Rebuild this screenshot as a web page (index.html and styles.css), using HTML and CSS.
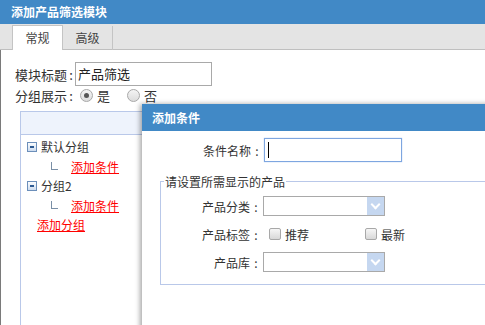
FILE: index.html
```html
<!DOCTYPE html>
<html lang="zh-CN">
<head>
  <meta charset="UTF-8" />
  <title>添加产品筛选模块</title>
  <link rel="stylesheet" href="styles.css">
</head>
<body>
  <div class="window">
    <div class="titlebar">添加产品筛选模块</div>

    <div class="tabs">
      <span class="tab active">常规</span>
      <span class="tab">高级</span>
    </div>

    <div class="content">
      <div class="row">
        <span class="label">模块标题<span class="colon">:</span></span>
        <span class="text-input">产品筛选</span>
      </div>
      <div class="row radios">
        <span class="label">分组展示<span class="colon">:</span></span>
        <span class="radio checked"></span><span class="opt">是</span>
        <span class="radio"></span><span class="opt">否</span>
      </div>

      <div class="tree-panel">
        <div class="tree-head"></div>
        <div class="tree">
          <div class="node"><span class="minus"></span>默认分组</div>
          <div class="leaf"><span class="elbow"></span><a href="#">添加条件</a></div>
          <div class="node"><span class="minus"></span>分组2</div>
          <div class="leaf"><span class="elbow"></span><a href="#">添加条件</a></div>
          <div class="add-group"><a href="#">添加分组</a></div>
        </div>
      </div>
    </div>

    <!-- popup over the module form -->
    <div class="dialog">
      <div class="dialog-title">添加条件</div>
      <div class="dialog-body">
        <div class="field name-field">
          <span class="dlabel">条件名称<span class="colon">:</span></span>
          <span class="text-input focus"><span class="caret"></span></span>
        </div>

        <fieldset class="products">
          <legend>请设置所需显示的产品</legend>
          <div class="field">
            <span class="dlabel">产品分类<span class="colon">:</span></span>
            <span class="select"><span class="arrow"></span></span>
          </div>
          <div class="field">
            <span class="dlabel">产品标签<span class="colon">:</span></span>
            <span class="check"></span><span class="check-text">推荐</span>
            <span class="check"></span><span class="check-text">最新</span>
          </div>
          <div class="field">
            <span class="dlabel">产品库<span class="colon">:</span></span>
            <span class="select"><span class="arrow"></span></span>
          </div>
        </fieldset>
      </div>
    </div>
  </div>
</body>
</html>
```

FILE: styles.css
```css
html, body {
  margin: 0;
  padding: 0;
  background: #fff;
  font-family: "Noto Sans CJK SC", "Liberation Sans", sans-serif;
  color: #333;
}

.window {
  position: relative;
  width: 485px;
  height: 325px;
  overflow: hidden;
}

.titlebar {
  height: 24px;
  line-height: 23px;
  padding-left: 11px;
  background: #4189c6;
  color: #fff;
  font-size: 12px;
  font-weight: bold;
}

.tabs {
  display: flex;
  height: 26px;
  padding-left: 12px;
  background: #e4e4e4;
  border-bottom: 1px solid #bfbfbf;
  box-sizing: border-box;
  align-items: flex-end;
}

.tab {
  width: 50px;
  height: 24px;
  line-height: 24px;
  text-align: center;
  font-size: 12px;
  color: #444;
  border-right: 1px solid #c4c4c4;
  box-sizing: border-box;
  margin-bottom: -1px;
}

.tab.active {
  height: 25px;
  background: #fff;
  border-left: 1px solid #c4c4c4;
  border-top: 1px solid #c4c4c4;
  width: 51px;
}

.content {
  height: 275px;
  border-left: 1px solid #7a7a7a;
  padding: 12px 0 0 14px;
  box-sizing: border-box;
}

.colon {
  display: inline-block;
  width: 8px;
  text-align: center;
}

.row {
  display: flex;
  align-items: center;
  font-size: 13px;
}

.label {
  width: 60px;
  white-space: nowrap;
}

.text-input {
  display: block;
  width: 137px;
  height: 24px;
  line-height: 22px;
  border: 1px solid #a9a9a9;
  box-sizing: border-box;
  padding-left: 2px;
  font-size: 13px;
  color: #222;
}

.radios {
  height: 17px;
  margin-top: 1px;
}

.radios .label {
  width: 65px;
}

.radio {
  width: 11px;
  height: 11px;
  border-radius: 50%;
  border: 1px solid #a8a8a8;
  background: linear-gradient(#f4f4f4, #dcdcdc);
  position: relative;
}

.radio.checked::after {
  content: "";
  position: absolute;
  left: 3px;
  top: 3px;
  width: 5px;
  height: 5px;
  border-radius: 50%;
  background: #555;
}

.opt {
  margin-left: 4px;
  margin-right: 17px;
}

.tree-panel {
  margin: 7px 0 0 5px;
  width: 460px;
  height: 230px;
  border: 1px solid #b9c8e9;
}

.tree-head {
  height: 22px;
  background: #eef3fc;
  border-bottom: 1px solid #b9c8e9;
}

.tree {
  padding: 2px 0 0 6px;
  font-size: 12px;
}

.node {
  display: flex;
  align-items: center;
  height: 19px;
  color: #333;
}

.minus {
  width: 10px;
  height: 10px;
  border: 1px solid #6c8fba;
  background: linear-gradient(#fbfdff, #cddcef);
  box-sizing: border-box;
  margin-right: 4px;
  position: relative;
}

.minus::after {
  content: "";
  position: absolute;
  left: 2px;
  top: 3px;
  width: 4px;
  height: 2px;
  background: #2d5a92;
}

.leaf {
  display: flex;
  align-items: flex-end;
  height: 20px;
  padding-left: 24px;
}

.elbow {
  width: 6px;
  height: 7px;
  border-left: 1px solid #7a8fa6;
  border-bottom: 1px solid #7a8fa6;
  margin: 0 13px 6px 0;
}

.tree a {
  color: #f00;
  text-decoration: underline;
  line-height: 18px;
}

.add-group {
  padding: 1px 0 0 10px;
}

.dialog {
  position: absolute;
  left: 142px;
  top: 104px;
  width: 360px;
  height: 240px;
  background: #fff;
  box-shadow: -2px 0 5px rgba(0, 0, 0, 0.35);
}

.dialog-title {
  height: 27px;
  line-height: 27px;
  padding-left: 10px;
  background: #4189c6;
  color: #fff;
  font-size: 12px;
  font-weight: bold;
}

.dialog-body {
  padding-top: 7px;
  font-size: 12px;
}

.dialog-body .colon {
  width: 12px;
}

.field {
  display: flex;
  align-items: center;
  height: 20px;
}

.dlabel {
  width: 101px;
  text-align: right;
  padding-right: 1px;
  white-space: nowrap;
}

.name-field {
  height: 24px;
}

.name-field .dlabel {
  width: 121px;
}

.text-input.focus {
  border-color: #7ea6e0;
  box-shadow: 0 0 1px #9cbcec;
  width: 138px;
  position: relative;
}

.caret {
  position: absolute;
  left: 3px;
  top: 3px;
  width: 1px;
  height: 16px;
  background: #000;
}

.products {
  margin: 11px 0 0 18px;
  padding: 6px 0 12px 0;
  border: 1px solid #b9c8e9;
  width: 340px;
}

.products legend {
  padding: 0 1px;
  margin-left: 3px;
  font-size: 12px;
  color: #333;
}

.products .field + .field {
  margin-top: 8px;
}

.select {
  display: block;
  position: relative;
  width: 122px;
  height: 20px;
  border: 1px solid #a9a9a9;
  box-sizing: border-box;
}

.arrow {
  position: absolute;
  right: 0;
  top: 0;
  width: 17px;
  height: 18px;
  background: #c5d7f0;
}

.arrow::after {
  content: "";
  position: absolute;
  left: 5px;
  top: 4px;
  width: 5px;
  height: 5px;
  border-right: 2px solid #fff;
  border-bottom: 2px solid #fff;
  transform: rotate(45deg);
}

.check {
  width: 12px;
  height: 12px;
  border: 1px solid #a8a8a8;
  border-radius: 2px;
  box-sizing: border-box;
  background: linear-gradient(#f6f6f6, #d8d8d8);
  margin-left: 6px;
}

.check-text {
  margin-left: 4px;
  width: 74px;
}
```
